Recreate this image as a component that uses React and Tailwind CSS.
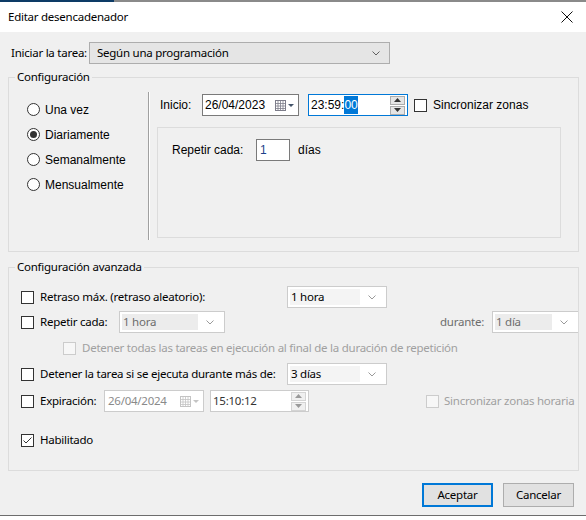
import React from "react";

const segoe = { fontFamily: '"Noto Sans", "Open Sans", sans-serif' };
const msSans = { fontFamily: '"Liberation Sans", Arial, sans-serif' };

// tamaño de texto estilo Segoe UI 9pt
const ui = "text-[11.5px] tracking-[-0.25px] whitespace-nowrap";
const ms = "text-[12px] whitespace-nowrap";

const Check = ({ checked = false, disabled = false }) => (
  <span
    className={`flex w-[13px] h-[13px] shrink-0 items-center justify-center border ${
      disabled ? "border-[#cccccc] bg-[#f7f7f7]" : "border-[#333333] bg-white"
    }`}
  >
    {checked && (
      <svg width="11" height="11" viewBox="0 0 11 11">
        <path d="M1.5 5.5 L4 8 L9.5 2.5" fill="none" stroke="#333" strokeWidth="1" />
      </svg>
    )}
  </span>
);

const Radio = ({ checked = false, label }) => (
  <div className="flex h-[25px] items-center">
    <span className="ml-[18px] flex w-[13px] h-[13px] items-center justify-center rounded-full border border-[#333333] bg-white">
      {checked && <span className="w-[7px] h-[7px] rounded-full bg-[#333333]" />}
    </span>
    <span className={`ml-[5px] text-black ${ms}`} style={msSans}>{label}</span>
  </div>
);

const Chevron = ({ color = "#606060" }) => (
  <svg width="8" height="5" viewBox="0 0 8 5">
    <path d="M0.5 0.5 L4 4 L7.5 0.5" fill="none" stroke={color} strokeWidth="1" />
  </svg>
);

const Combo = ({ value, width, disabled = false, noRight = false }) => (
  <div
    className={`flex h-[22px] shrink-0 items-stretch border border-[#cccccc] bg-white p-[2px] ${
      noRight ? "border-r-0" : ""
    }`}
    style={{ width }}
  >
    <div
      className={`flex flex-1 items-center pl-[1px] ${ui} ${
        disabled ? "bg-[#ececec] text-[#6d6d6d]" : "bg-[#f4f4f4] text-black"
      }`}
    >
      {value}
    </div>
    <div className="flex w-[24px] items-center justify-center">
      <Chevron color="#9a9a9a" />
    </div>
  </div>
);

const CalendarIcon = ({ color = "#7d7d8a", arrow = "#44546a" }) => (
  <svg width="20" height="12" viewBox="0 0 20 12" className="shrink-0">
    <rect x="0.5" y="1.5" width="10" height="10" fill="#ffffff" stroke={color} />
    <path d="M0.5 4.5 H10.5 M0.5 7 H10.5 M0.5 9.5 H10.5 M3 1.5 V11.5 M5.5 1.5 V11.5 M8 1.5 V11.5" stroke={color} strokeWidth="0.8" />
    <path d="M13 5 L19 5 L16 8 Z" fill={arrow} />
  </svg>
);

const Spinner = ({ disabled = false }) => (
  <div className="flex shrink-0 flex-col gap-[1px]">
    {[0, 1].map((i) => (
      <div
        key={i}
        className={`flex w-[15px] h-[9px] items-center justify-center border ${
          disabled ? "border-[#d4d4d4] bg-[#f0f0f0]" : "border-[#adadad] bg-[#e5e5e5]"
        }`}
      >
        <svg width="7" height="4" viewBox="0 0 7 4">
          <path d={i === 0 ? "M0 4 L3.5 0 L7 4 Z" : "M0 0 L3.5 4 L7 0 Z"} fill={disabled ? "#9a9a9a" : "#333"} />
        </svg>
      </div>
    ))}
  </div>
);

export default function App() {
  return (
    <div className="flex w-[586px] h-[520px] flex-col overflow-hidden bg-[#f0f0f0]" style={segoe}>
      {/* franja superior */}
      <div className="flex h-[2px]">
        <div className="w-[114px] bg-[#0d3b66]" />
        <div className="flex-1 bg-[#8a8a8a]" />
      </div>

      {/* barra de título */}
      <div className="flex h-[30px] items-center justify-between bg-white pl-[8px] pr-[13px]">
        <span className={`text-black ${ui}`}>Editar desencadenador</span>
        <svg width="12" height="12" viewBox="0 0 12 12">
          <path d="M0.5 0.5 L11.5 11.5 M11.5 0.5 L0.5 11.5" stroke="#111" strokeWidth="1" />
        </svg>
      </div>

      {/* cuerpo */}
      <div className="flex flex-1 flex-col px-[8px]">
        <div className="mt-[10px] flex h-[22px] items-center">
          <span className={`ml-[3px] w-[78px] text-black ${ui}`}>Iniciar la tarea:</span>
          <div className="flex h-[22px] w-[301px] items-center justify-between border border-[#adadad] bg-[#e5e5e5] pl-[7px] pr-[9px]">
            <span className={`text-black ${ui}`}>Según una programación</span>
            <Chevron />
          </div>
        </div>

        {/* Configuración */}
        <fieldset className="mt-[5px] h-[183px] w-[571px] border border-[#dcdcdc]">
          <legend className={`ml-[6px] px-[2px] leading-[16px] text-black ${ui}`}>Configuración</legend>
          <div className="flex">
            <div className="w-[139px] pt-[12px]">
              <Radio label="Una vez" />
              <Radio label="Diariamente" checked />
              <Radio label="Semanalmente" />
              <Radio label="Mensualmente" />
            </div>
            <div className="mt-[7px] h-[148px] w-[2px] border-l border-[#a0a0a0] bg-white" />
            <div className="ml-[7px] flex flex-col" style={msSans}>
              <div className="mt-[9px] flex h-[22px] items-center">
                <span className={`w-[45px] pl-[3px] text-black ${ms}`}>Inicio:</span>
                <div className="flex h-[22px] w-[97px] items-center justify-between border border-[#7a7a7a] bg-white pl-[2px] pr-[3px]">
                  <span className={`text-black ${ms}`}>26/04/2023</span>
                  <CalendarIcon />
                </div>
                <div className="ml-[9px] flex h-[22px] w-[100px] items-center justify-between border border-[#0078d7] bg-white pl-[2px] pr-[2px]">
                  <span className={`flex text-black ${ms}`}>
                    23:59:<span className="bg-[#0078d7] text-white">00</span>
                  </span>
                  <Spinner />
                </div>
                <span className="ml-[6px]"><Check /></span>
                <span className={`ml-[6px] text-black ${ms}`}>Sincronizar zonas</span>
              </div>
              <div className="mt-[11px] h-[111px] w-[404px] border border-[#dcdcdc] pt-[11px] pl-[14px]">
                <div className="flex h-[22px] items-center">
                  <span className={`w-[84px] text-black ${ms}`}>Repetir cada:</span>
                  <div className="flex h-[22px] w-[34px] items-center border border-[#7a7a7a] bg-white pl-[3px]">
                    <span className={`text-[#1c3f8a] ${ms}`}>1</span>
                  </div>
                  <span className={`ml-[8px] text-black ${ms}`}>días</span>
                </div>
              </div>
            </div>
          </div>
        </fieldset>

        {/* Configuración avanzada */}
        <fieldset className="mt-[7px] h-[212px] w-[571px] overflow-hidden border border-[#dcdcdc] pl-[12px]">
          <legend className={`ml-[-6px] px-[2px] leading-[16px] text-black ${ui}`}>Configuración avanzada</legend>

          <div className="mt-[11px] flex h-[22px] items-center">
            <div className="flex w-[266px] items-center">
              <Check />
              <span className={`ml-[6px] text-black ${ui}`}>Retraso máx. (retraso aleatorio):</span>
            </div>
            <Combo value="1 hora" width={100} />
          </div>

          <div className="mt-[3px] flex h-[22px] items-center">
            <div className="flex w-[98px] items-center">
              <Check />
              <span className={`ml-[6px] text-black ${ui}`}>Repetir cada:</span>
            </div>
            <Combo value="1 hora" width={106} disabled />
            <span className={`ml-auto mr-[8px] text-[#6d6d6d] ${ui}`}>durante:</span>
            <Combo value="1 día" width={86} disabled noRight />
          </div>

          <div className="mt-[7px] flex h-[16px] items-center pl-[42px]">
            <Check disabled />
            <span className={`ml-[6px] text-[#a0a0a0] ${ui}`}>
              Detener todas las tareas en ejecución al final de la duración de repetición
            </span>
          </div>

          <div className="mt-[7px] flex h-[22px] items-center">
            <div className="flex w-[266px] items-center">
              <Check />
              <span className={`ml-[6px] text-black ${ui}`}>Detener la tarea si se ejecuta durante más de:</span>
            </div>
            <Combo value="3 días" width={100} />
          </div>

          <div className="mt-[5px] flex h-[22px] items-center">
            <div className="flex w-[83px] items-center">
              <Check />
              <span className={`ml-[6px] text-black ${ui}`}>Expiración:</span>
            </div>
            <div className="flex h-[22px] w-[100px] items-center justify-between border border-[#cccccc] bg-white pl-[3px] pr-[3px]">
              <span className={`text-[#8a8a8a] ${ui}`}>26/04/2024</span>
              <CalendarIcon color="#c4c4c4" arrow="#c4c4c4" />
            </div>
            <div className="ml-[6px] flex h-[22px] w-[99px] items-center justify-between border border-[#cccccc] bg-white pl-[2px] pr-[2px]">
              <span className={`text-[#333333] ${ui}`}>15:10:12</span>
              <Spinner disabled />
            </div>
            <span className="ml-[117px]"><Check disabled /></span>
            <span className={`ml-[5px] text-[#a0a0a0] ${ui}`}>Sincronizar zonas horaria</span>
          </div>

          <div className="mt-[20px] flex h-[16px] items-center">
            <Check checked />
            <span className={`ml-[6px] text-black ${ui}`}>Habilitado</span>
          </div>
        </fieldset>

        {/* botones */}
        <div className="mt-[12px] flex justify-end gap-[10px] pr-[4px]">
          <button className={`h-[24px] w-[71px] border-2 border-[#0078d7] bg-[#e1e1e1] text-black ${ui}`}>
            Aceptar
          </button>
          <button className={`h-[24px] w-[71px] border border-[#adadad] bg-[#e1e1e1] text-black ${ui}`}>
            Cancelar
          </button>
        </div>
      </div>

      {/* borde inferior */}
      <div className="h-px bg-[#6d6d6d]" />
      <div className="h-[4px] bg-white" />
    </div>
  );
}
